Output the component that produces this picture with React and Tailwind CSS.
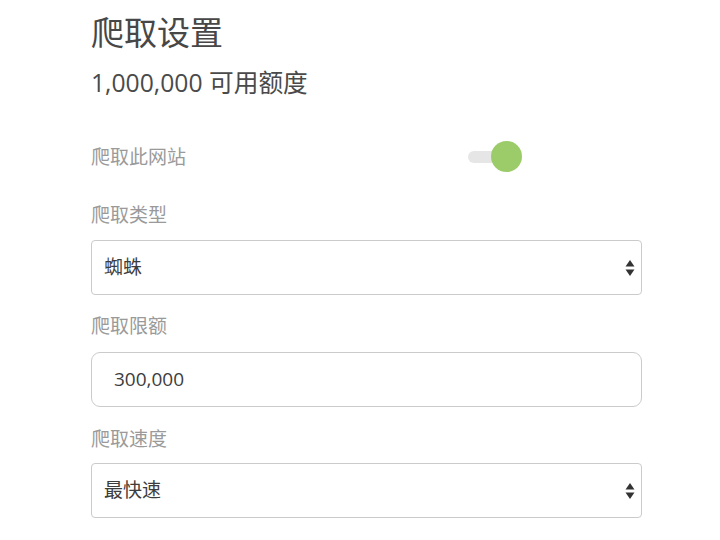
import React from 'react';

const font = { fontFamily: '"Open Sans", "Noto Sans CJK SC", sans-serif' };

const Arrows = () => (
  <svg width="10" height="18" viewBox="0 0 10 18" className="shrink-0">
    <path d="M5 1 L9.5 7.5 L0.5 7.5 Z" fill="#333" />
    <path d="M0.5 10.5 L9.5 10.5 L5 17 Z" fill="#333" />
  </svg>
);

const SelectBox = ({ value }) => (
  <div className="flex items-center justify-between h-[55px] w-[551px] border border-[#cbcbcb] rounded-[4px] pl-[12px] pr-[6px] bg-white">
    <span className="text-[19px] text-[#3d3d3d]">{value}</span>
    <Arrows />
  </div>
);

const Label = ({ children, className = '' }) => (
  <div className={`text-[19px] leading-[26px] text-[#9a9a9a] ${className}`}>{children}</div>
);

export default function App() {
  const [on, setOn] = React.useState(true);
  return (
    <div className="w-[720px] h-[540px] bg-white overflow-hidden" style={font}>
      <div className="pl-[91px] pt-[12px]">
        <h1 className="text-[33px] leading-[42px] text-[#474747]">爬取设置</h1>
        <div className="mt-[14px] text-[24.7px] leading-[30px] text-[#4a4a4a]">1,000,000 可用额度</div>

        <div className="mt-[43px] flex items-center w-[431px] justify-between">
          <Label>爬取此网站</Label>
          <button onClick={() => setOn(!on)} className="relative w-[54px] h-[31px]">
            <span className="absolute left-0 top-[10px] w-[36px] h-[12px] rounded-full bg-[#e6e6e6]" />
            <span className="absolute right-0 top-0 w-[31px] h-[31px] rounded-full bg-[#9ccc6a]" />
          </button>
        </div>

        <Label className="mt-[30px]">爬取类型</Label>
        <div className="mt-[12px]">
          <SelectBox value="蜘蛛" />
        </div>

        <Label className="mt-[18px]">爬取限额</Label>
        <div className="mt-[13px] flex items-center h-[55px] w-[551px] border border-[#cbcbcb] rounded-[9px] pl-[22px]">
          <span className="text-[19px] text-[#3d3d3d]">300,000</span>
        </div>

        <Label className="mt-[19px]">爬取速度</Label>
        <div className="mt-[11px]">
          <SelectBox value="最快速" />
        </div>
      </div>
    </div>
  );
}
